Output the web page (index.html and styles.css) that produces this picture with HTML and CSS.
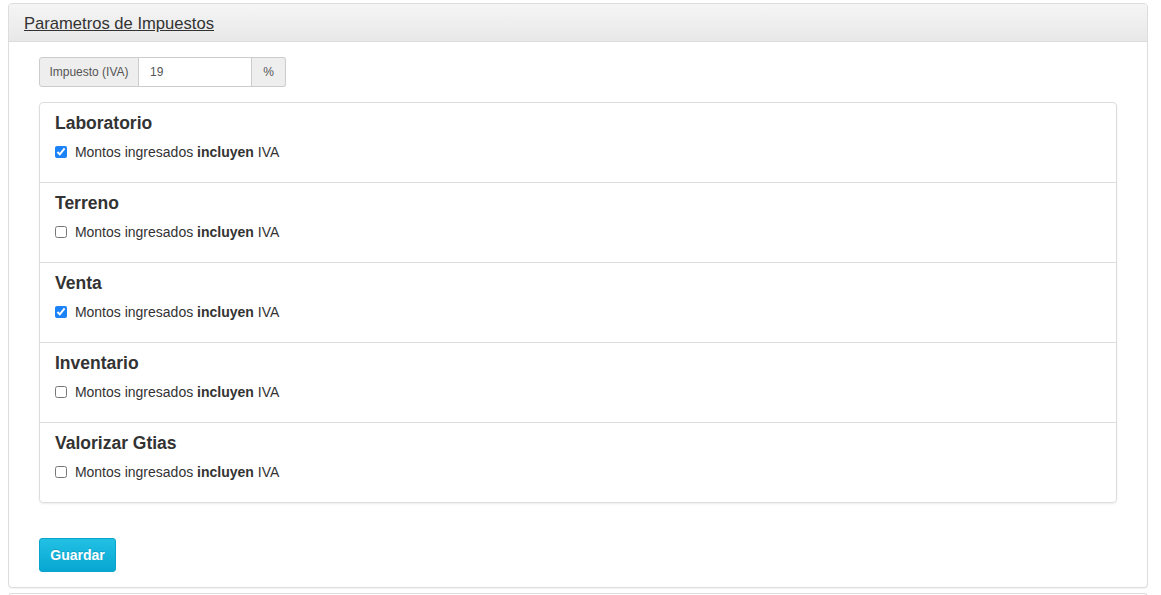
FILE: index.html
```html
<!DOCTYPE html>
<html lang="es">
<head>
<meta charset="utf-8">
<title>Parametros de Impuestos</title>
<link rel="stylesheet" href="styles.css">
</head>
<body>
<div class="panel">
  <div class="panel-heading">
    <h3 class="panel-title"><a href="#">Parametros de Impuestos</a></h3>
  </div>
  <div class="panel-body">
    <div class="input-group">
      <span class="addon">Impuesto (IVA)</span>
      <input class="form-control" type="text" value="19">
      <span class="addon addon-right">%</span>
    </div>

    <div class="list-group">
      <div class="list-item">
        <h4>Laboratorio</h4>
        <label class="check"><input type="checkbox" checked> Montos ingresados <b>incluyen</b> IVA</label>
      </div>
      <div class="list-item">
        <h4>Terreno</h4>
        <label class="check"><input type="checkbox"> Montos ingresados <b>incluyen</b> IVA</label>
      </div>
      <div class="list-item">
        <h4>Venta</h4>
        <label class="check"><input type="checkbox" checked> Montos ingresados <b>incluyen</b> IVA</label>
      </div>
      <div class="list-item">
        <h4>Inventario</h4>
        <label class="check"><input type="checkbox"> Montos ingresados <b>incluyen</b> IVA</label>
      </div>
      <div class="list-item">
        <h4>Valorizar Gtias</h4>
        <label class="check"><input type="checkbox"> Montos ingresados <b>incluyen</b> IVA</label>
      </div>
    </div>

    <button class="btn-info" type="button">Guardar</button>
  </div>
</div>
<div class="panel panel-next"></div>
</body>
</html>
```

FILE: styles.css
```css
* { box-sizing: border-box; }
html, body { margin: 0; padding: 0; background: #fff; }
body {
  font-family: "Liberation Sans", Arial, sans-serif;
  font-size: 14px;
  line-height: 20px;
  color: #333;
  padding: 3px 13px 0 8px;
}
.panel {
  border: 1px solid #ddd;
  border-radius: 4px;
  background: #fff;
  box-shadow: 0 1px 1px rgba(0,0,0,0.05);
}
.panel-heading {
  height: 38px;
  padding: 10px 15px 0 15px;
  background: linear-gradient(to bottom, #f5f5f5 0%, #e8e8e8 100%);
  border-bottom: 1px solid #ddd;
  border-radius: 3px 3px 0 0;
}
.panel-title {
  margin: 0;
  font-size: 16.6px;
  font-weight: normal;
  line-height: 20px;
}
.panel-title a { color: #333; text-decoration: underline; }
.panel-body {
  padding: 15px 30px 15px 30px;
}
.input-group {
  display: flex;
  width: 247px;
  height: 30px;
}
.addon {
  display: flex;
  align-items: center;
  justify-content: center;
  flex-shrink: 0;
  padding: 0;
  font-size: 12px;
  white-space: nowrap;
  color: #555;
  background: #eee;
  border: 1px solid #ccc;
  border-radius: 3px 0 0 3px;
  width: 100px;
}
.addon-right {
  width: 34px;
  border-radius: 0 3px 3px 0;
  border-left: 0;
}
.form-control {
  width: 113px;
  flex-shrink: 0;
  height: 30px;
  border: 1px solid #ccc;
  border-left: 0;
  border-right: 1px solid #ccc;
  padding: 0 11px;
  font-family: inherit;
  font-size: 12px;
  color: #555;
  outline: none;
}
.list-group {
  margin-top: 15px;
  border: 1px solid #ddd;
  border-radius: 4px;
  box-shadow: 0 1px 2px rgba(0,0,0,0.075);
}
.list-item {
  height: 80px;
  padding: 10px 15px;
  border-top: 1px solid #ddd;
}
.list-item:first-child { border-top: 0; height: 79px; }
.list-item h4 {
  margin: 0;
  font-size: 17.5px;
  font-weight: bold;
  line-height: 20px;
  color: #333;
}
.check {
  display: flex;
  align-items: center;
  margin-top: 9px;
  font-size: 14px;
  line-height: 20px;
  white-space: pre;
}
.check input {
  margin: 0 4px 0 0;
  width: 12px;
  height: 12px;
  accent-color: #1c82f7;
}
.check b { font-weight: bold; }
.btn-info {
  display: block;
  margin-top: 35px;
  width: 77px;
  height: 34px;
  font-family: inherit;
  font-size: 14px;
  font-weight: bold;
  color: #fff;
  background: linear-gradient(to bottom, #22c0e4 0%, #07a7d2 100%);
  border: 1px solid #0aa3cc;
  border-radius: 3px;
  text-shadow: 0 -1px 0 rgba(0,0,0,0.15);
  padding: 0;
}
.panel-next {
  margin-top: 5px;
  height: 10px;
  border-bottom: 0;
  border-radius: 4px 4px 0 0;
}
```
